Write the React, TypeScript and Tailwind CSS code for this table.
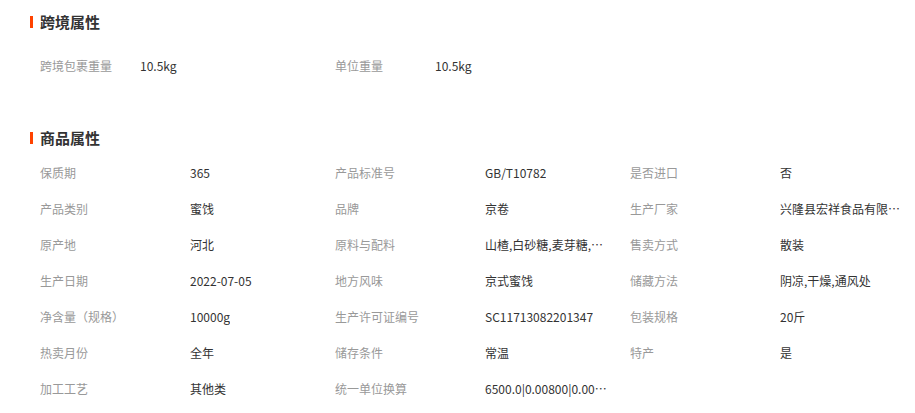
const crossBorder = [
  { label: "跨境包裹重量", value: "10.5kg" },
  { label: "单位重量", value: "10.5kg" },
];

const goods = [
  { label: "保质期", value: "365" },
  { label: "产品标准号", value: "GB/T10782" },
  { label: "是否进口", value: "否" },
  { label: "产品类别", value: "蜜饯" },
  { label: "品牌", value: "京卷" },
  { label: "生产厂家", value: "兴隆县宏祥食品有限公司" },
  { label: "原产地", value: "河北" },
  { label: "原料与配料", value: "山楂,白砂糖,麦芽糖,食品添加剂" },
  { label: "售卖方式", value: "散装" },
  { label: "生产日期", value: "2022-07-05" },
  { label: "地方风味", value: "京式蜜饯" },
  { label: "储藏方法", value: "阴凉,干燥,通风处" },
  { label: "净含量（规格）", value: "10000g" },
  { label: "生产许可证编号", value: "SC11713082201347" },
  { label: "包装规格", value: "20斤" },
  { label: "热卖月份", value: "全年" },
  { label: "储存条件", value: "常温" },
  { label: "特产", value: "是" },
  { label: "加工工艺", value: "其他类" },
  { label: "统一单位换算", value: "6500.0|0.00800|0.00050" },
];

function Title({ text }: { text: string }) {
  return (
    <div className="flex h-6 items-center">
      <span className="h-[12px] w-[3px] bg-[#ff4200]" />
      <span className="ml-[7px] text-[15px] font-bold leading-6 text-[#333]">{text}</span>
    </div>
  );
}

export default function App() {
  return (
    <div
      className="h-[413px] w-[915px] overflow-hidden bg-white pl-[30px] pt-[10px]"
      style={{ fontFamily: '"Microsoft YaHei", "Noto Sans CJK SC", sans-serif' }}
    >
      {/* 跨境属性 */}
      <Title text="跨境属性" />
      <div className="mt-[14px] flex pl-[10px]">
        {crossBorder.map((item) => (
          <div key={item.label} className="flex h-9 w-[295px] items-center text-xs">
            <span className="w-[100px] shrink-0 text-[#999]">{item.label}</span>
            <span className="max-w-[124px] truncate text-[#333]">{item.value}</span>
          </div>
        ))}
      </div>

      {/* 商品属性 */}
      <div className="mt-[42px]">
        <Title text="商品属性" />
      </div>
      <div className="mt-[5px] grid w-[885px] grid-cols-[295px_295px_295px] pl-[10px]">
        {goods.map((item) => (
          <div key={item.label} className="flex h-9 items-center text-xs">
            <span className="w-[150px] shrink-0 text-[#999]">{item.label}</span>
            <span className="max-w-[124px] truncate text-[#333]">{item.value}</span>
          </div>
        ))}
      </div>
    </div>
  );
}
